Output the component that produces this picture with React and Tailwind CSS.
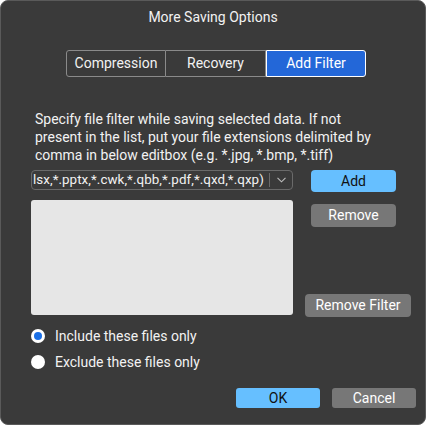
import React from "react";

export default function App() {
  const font = { fontFamily: "Roboto, 'Noto Sans', sans-serif" };
  return (
    <div
      className="w-[426px] h-[425px] bg-[#3a3a3a] rounded-[8px] border border-[#5a5a5a] text-[#f2f2f2] text-[14px] overflow-hidden flex flex-col"
      style={font}
    >
      <div className="h-[31px] flex items-center justify-center pt-[1px] text-[14px]">
        More Saving Options
      </div>
      <div className="mt-[18px] ml-[65px] flex h-[27px] w-[300px]">
        <div className="w-[100px] flex items-center justify-center border border-[#8a8a8a] rounded-l-[3px] text-[14px]">
          Compression
        </div>
        <div className="w-[100px] flex items-center justify-center border-y border-r border-[#8a8a8a] text-[14px]">
          Recovery
        </div>
        <div className="w-[100px] flex items-center justify-center bg-[#2367d8] border border-white rounded-r-[3px] text-[14px] text-white">
          Add Filter
        </div>
      </div>
      <div className="mt-[33px] ml-[34px] w-[340px] leading-[18px] text-[14px]">
        Specify file filter while saving selected data. If not present in the list, put your file extensions delimited by comma in below editbox (e.g. *.jpg, *.bmp, *.tiff)
      </div>
      <div className="mt-[6px] ml-[30px] flex">
        <div className="w-[262px] flex flex-col">
          <div className="h-[20px] border border-[#6a6a6a] rounded-[4px] flex items-center overflow-hidden">
            <div className="flex-1 pl-[1px] whitespace-nowrap overflow-hidden text-[13.4px] tracking-[0.05px] leading-[18px]">
              lsx,*.pptx,*.cwk,*.qbb,*.pdf,*.qxd,*.qxp)
            </div>
            <div className="w-px h-[14px] bg-[#6a6a6a]" />
            <div className="w-[22px] flex items-center justify-center">
              <svg width="9" height="6" viewBox="0 0 9 6" fill="none">
                <path d="M0.5 0.8 L4.5 4.8 L8.5 0.8" stroke="#bdbdbd" strokeWidth="1.1" />
              </svg>
            </div>
          </div>
          <div className="mt-[10px] h-[115px] bg-[#e6e6e6] rounded-[3px]" />
        </div>
        <div className="flex flex-col">
          <button className="ml-[18px] w-[85px] h-[22px] bg-[#66bfff] rounded-[4px] text-[#111] text-[14px] flex items-center justify-center">
            Add
          </button>
          <button className="mt-[12px] ml-[18px] w-[85px] h-[23px] bg-[#777777] rounded-[4px] text-white text-[14px] flex items-center justify-center">
            Remove
          </button>
          <button className="mt-[67px] ml-[12px] w-[106px] h-[23px] bg-[#777777] rounded-[4px] text-white text-[14px] flex items-center justify-center">
            Remove Filter
          </button>
        </div>
      </div>
      <div className="mt-[9px] ml-[30px] flex flex-col gap-[6px]">
        <div className="h-[20px] flex items-center gap-[10px]">
          <div className="w-[14px] h-[14px] rounded-full bg-white flex items-center justify-center">
            <div className="w-[8px] h-[8px] rounded-full bg-[#1a6fe6]" />
          </div>
          <span className="text-[14px]">Include these files only</span>
        </div>
        <div className="h-[20px] flex items-center gap-[10px]">
          <div className="w-[14px] h-[14px] rounded-full bg-white" />
          <span className="text-[14px]">Exclude these files only</span>
        </div>
      </div>
      <div className="mt-[16px] ml-[235px] flex gap-[12px]">
        <button className="w-[84px] h-[20px] bg-[#66bfff] rounded-[3px] text-[#111] text-[14px] flex items-center justify-center">
          OK
        </button>
        <button className="w-[84px] h-[20px] bg-[#777777] rounded-[3px] text-white text-[14px] flex items-center justify-center">
          Cancel
        </button>
      </div>
    </div>
  );
}
